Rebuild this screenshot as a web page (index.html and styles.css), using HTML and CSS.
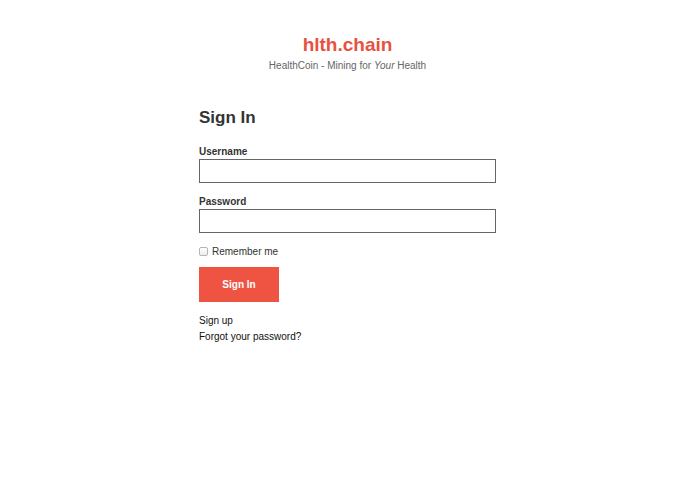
FILE: index.html
```html
<!DOCTYPE html>
<html lang="en">
<head>
<meta charset="utf-8">
<title>hlth.chain - Sign In</title>
<link rel="stylesheet" href="styles.css">
</head>
<body>
<header class="brand">
  <h1 class="brand-title">hlth.chain</h1>
  <p class="brand-tagline">HealthCoin - Mining for <em>Your</em> Health</p>
</header>
<main class="signin">
  <h2 class="signin-title">Sign In</h2>
  <form class="signin-form">
    <div class="field">
      <label class="field-label" for="username">Username</label>
      <input class="field-input" id="username" type="text">
    </div>
    <div class="field field-password">
      <label class="field-label" for="password">Password</label>
      <input class="field-input" id="password" type="password">
    </div>
    <label class="remember"><input class="remember-box" type="checkbox"> Remember me</label>
    <button class="submit" type="button">Sign In</button>
  </form>
  <nav class="links">
    <a class="link" href="#">Sign up</a>
    <a class="link" href="#">Forgot your password?</a>
  </nav>
</main>
</body>
</html>
```
FILE: styles.css
```css
html, body {
  margin: 0;
  padding: 0;
  background: #fff;
}
body {
  font-family: "Liberation Sans", Arial, Helvetica, sans-serif;
  color: #333;
  font-size: 10px;
}
.brand {
  padding-top: 34px;
  text-align: center;
}
.brand-title {
  margin: 0;
  font-size: 19px;
  line-height: 22px;
  font-weight: bold;
  color: #e8513f;
}
.brand-tagline {
  margin: 4px 0 0;
  font-size: 10px;
  line-height: 12px;
  color: #666;
}
.signin {
  width: 297px;
  margin: 36px auto 0;
}
.signin-title {
  margin: 0;
  font-size: 17px;
  line-height: 20px;
  font-weight: bold;
  color: #333;
}
.signin-form {
  display: flex;
  flex-direction: column;
  align-items: flex-start;
  margin: 17px 0 0;
}
.field {
  display: flex;
  flex-direction: column;
  width: 100%;
}
.field-password {
  margin-top: 12px;
}
.field-label {
  font-size: 10px;
  line-height: 13px;
  font-weight: bold;
  color: #333;
  margin-bottom: 1px;
}
.field-input {
  box-sizing: border-box;
  width: 100%;
  height: 24px;
  margin: 0;
  border: 1px solid #666;
  border-radius: 0;
  padding: 2px 4px;
  font: inherit;
  background: #fff;
}
.remember {
  display: flex;
  align-items: center;
  gap: 4px;
  margin-top: 13px;
  font-size: 10px;
  line-height: 12px;
  color: #333;
}
.remember-box {
  appearance: none;
  -webkit-appearance: none;
  box-sizing: border-box;
  width: 9px;
  height: 9px;
  margin: 0;
  border: 1px solid #b5b5b5;
  border-radius: 2px;
  background: linear-gradient(#fff, #ececec);
  position: relative;
  top: -1px;
}
.submit {
  margin-top: 9px;
  width: 80px;
  height: 35px;
  border: 0;
  border-radius: 0;
  background: #ef5443;
  color: #fff;
  font: inherit;
  font-size: 10px;
  font-weight: bold;
  padding: 0;
}
.links {
  display: flex;
  flex-direction: column;
  margin-top: 11px;
}
.link {
  font-size: 10px;
  line-height: 16px;
  color: #111;
  text-decoration: none;
}
```
